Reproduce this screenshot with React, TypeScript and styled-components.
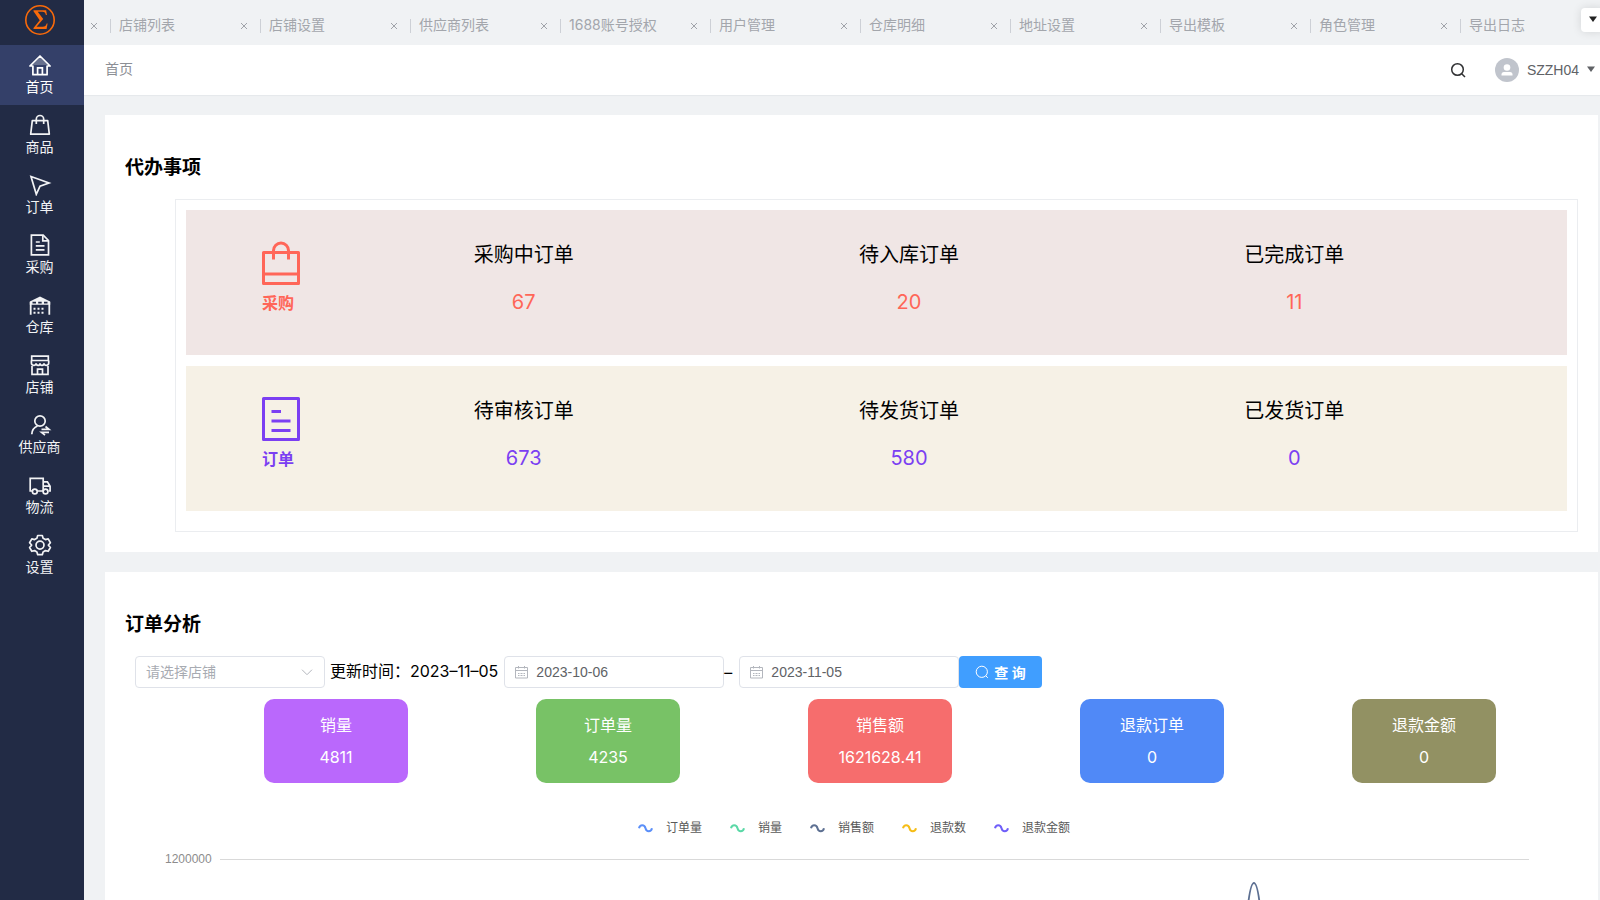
import React from "react";
import styled, { createGlobalStyle } from "styled-components";

const uiFont = `Inter, "Noto Sans CJK SC", sans-serif`;
const fieldFont = `"Liberation Sans", "Noto Sans CJK SC", sans-serif`;

const GlobalStyle = createGlobalStyle`
  *, *::before, *::after { box-sizing: border-box; }
  body { margin: 0; font-family: ${uiFont}; font-size: 14px; color: #000; background: #f0f2f4; }
  button, input, select { font: inherit; color: inherit; margin: 0; }
  a { color: inherit; text-decoration: none; }
  h3, p, ul, dl, dd { margin: 0; padding: 0; }
  svg { display: block; flex: none; }
`;

const Shell = styled.div`
  display: grid;
  grid-template-columns: 84px minmax(0, 1fr);
  height: 100vh;
  overflow: hidden;
`;

const Sidebar = styled.nav`
  display: flex;
  flex-direction: column;
  background: #222b45;
`;

const Logo = styled.a`
  display: flex;
  justify-content: center;
  height: 45px;
  padding: 4px 5px 0 0;
`;

const SideLink = styled.a<{ $active?: boolean }>`
  display: flex;
  flex-direction: column;
  align-items: center;
  gap: 1px;
  height: 60px;
  padding: 9px 5px 0 0;
  line-height: 20px;
  color: ${(p) => (p.$active ? "#fff" : "#f2f3f5")};
  background: ${(p) => (p.$active ? "#344069" : "transparent")};
`;

const Main = styled.div`
  display: flex;
  flex-direction: column;
  min-width: 0;
`;

const TabBar = styled.div`
  position: relative;
  display: flex;
  flex: none;
  align-items: center;
  height: 45px;
  padding-top: 7px;
  overflow: hidden;
  color: #a3a6ac;
`;

const Tab = styled.div<{ $cut?: boolean }>`
  display: flex;
  flex: none;
  align-items: center;
  justify-content: space-between;
  width: ${(p) => (p.$cut ? 26 : 150)}px;
  padding: 0 10px 0 ${(p) => (p.$cut ? 0 : 8)}px;
  border-left: ${(p) => (p.$cut ? 0 : 1)}px solid #cdd0d6;
  height: 14px;
  white-space: nowrap;
`;

const NavText = styled.a`
  padding-bottom: 2px;
  line-height: 20px;
`;

const PlainButton = styled.button`
  display: flex;
  align-items: center;
  justify-content: center;
  padding: 0;
  border: 0;
  background: none;
`;

const CloseButton = styled(PlainButton)`
  width: 12px;
  height: 12px;
  margin-left: auto;
`;

const TabMenuButton = styled(PlainButton)`
  position: absolute;
  top: 8px;
  right: -5px;
  width: 24px;
  height: 24px;
  border-radius: 4px;
  background: #fff;
  box-shadow: 0 0 10px rgba(0, 0, 0, 0.12);
`;

const TopBar = styled.header`
  display: flex;
  flex: none;
  align-items: center;
  justify-content: space-between;
  height: 50px;
  padding: 0 5px 0 21px;
  background: #fff;
  box-shadow: 0 1px 1px rgba(0, 21, 41, 0.04);
`;

const Crumb = styled(NavText)`
  color: #8c8f95;
`;

const UserArea = styled.div`
  display: flex;
  align-items: center;
  gap: 29px;
`;

const UserButton = styled(PlainButton)`
  gap: 8px;
  font-family: ${fieldFont};
  color: #606266;
`;

const Content = styled.main`
  display: flex;
  flex-direction: column;
  gap: 20px;
  min-height: 0;
  padding: 20px 2px 0 21px;
`;

const Panel = styled.section`
  flex: none;
  padding: 41px 20px 20px;
  background: #fff;
`;

const PanelTitle = styled.h3`
  margin-bottom: 19px;
  font-size: 19px;
  line-height: 24px;
`;

const TodoBox = styled.div`
  display: flex;
  flex-direction: column;
  gap: 11px;
  margin-left: 50px;
  padding: 10px 10px 20px;
  border: 1px solid #ebedf0;
`;

const TodoRow = styled.div<{ $bg: string; $accent: string }>`
  display: grid;
  grid-template-columns: 69px repeat(3, 1fr);
  min-height: 145px;
  padding: 30px 80px 0 76px;
  background: ${(p) => p.$bg};
  color: ${(p) => p.$accent};
`;

const TodoKind = styled.div`
  display: flex;
  flex-direction: column;
  gap: 6px;
  padding-top: 1px;
  font-size: 16px;
  font-weight: 700;
  line-height: 24px;
`;

const TodoCell = styled.div`
  display: flex;
  flex-direction: column;
  align-items: center;
  gap: 17px;
  font-size: 20px;
  line-height: 30px;
`;

const TodoLabel = styled.span`
  color: #000;
`;

const Toolbar = styled.form`
  display: flex;
  align-items: center;
  height: 32px;
  margin: 0 0 11px 10px;
`;

const Field = styled.label<{ $width: number }>`
  display: flex;
  align-items: center;
  gap: 8px;
  width: ${(p) => p.$width}px;
  height: 32px;
  padding: 0 11px 0 10px;
  border: 1px solid #dfe2e9;
  border-radius: 4px;
  background: #fff;
  font-family: ${fieldFont};
  color: #606266;
`;

const TextInput = styled.input`
  flex: 1;
  min-width: 0;
  padding: 0;
  border: 0;
  outline: 0;
  background: none;
`;

const ShopSelect = styled.select`
  flex: 1;
  min-width: 0;
  padding: 0;
  border: 0;
  outline: 0;
  appearance: none;
  background: none;
  color: #a8abb2;
`;

const UpdateText = styled.span`
  padding: 0 6px 4px 5px;
  font-size: 16px;
  white-space: nowrap;
`;

const Dash = styled.span`
  width: 15px;
  font-size: 16px;
`;

const QueryButton = styled.button`
  display: flex;
  align-items: center;
  gap: 5px;
  height: 32px;
  padding: 0 16px;
  border: 0;
  border-radius: 4px;
  background: #409eff;
  color: #fff;
  font-weight: 700;
  white-space: nowrap;
`;

const Stats = styled.dl`
  display: grid;
  grid-template-columns: repeat(5, 1fr);
  justify-items: center;
  padding: 0 18px 0 75px;
`;

const StatCard = styled.div<{ $bg: string }>`
  width: 144px;
  padding: 10px 0;
  border-radius: 10px;
  background: ${(p) => p.$bg};
  color: #fff;
  font-size: 16px;
  line-height: 32px;
  text-align: center;
`;

const Legend = styled.ul`
  display: flex;
  justify-content: center;
  gap: 28px;
  margin: 35px 0 11px 5px;
  list-style: none;
  font-size: 12px;
  line-height: 20px;
  color: #595959;
`;

const LegendItem = styled.li`
  display: flex;
  align-items: center;
  gap: 13px;
`;

const Chart = styled.div`
  display: grid;
  grid-template-columns: auto 1fr;
  gap: 8px;
  padding: 0 49px 0 40px;
`;

const AxisLabel = styled.span`
  font-family: ${fieldFont};
  font-size: 12px;
  line-height: 20px;
  color: #8c8c8c;
`;

const Plot = styled.div`
  margin-top: 10px;
  border-top: 1px solid #d9d9d9;
`;

const icon = (body: React.ReactNode) => (
  <svg width="24" height="22" viewBox="0 0 24 22" fill="none" stroke="currentColor" strokeWidth="1.7">
    {body}
  </svg>
);

const sideItems = [
  { name: "首页", art: icon(<><path d="M12 2 1.9 12h3v8.7h14.2V12h3Z" strokeLinejoin="round" /><path d="M12 3 4 11h16Z" fill="currentColor" fillOpacity=".25" stroke="none" /><path d="M9.6 20.5v-6.7h4.8v6.7" /></>) },
  { name: "商品", art: icon(<><path d="M4.3 6.6h15.4l1.6 13.6H2.7Z" strokeLinejoin="round" /><path d="M8.3 10V5.2a3.7 3.7 0 0 1 7.4 0V10" /></>) },
  { name: "订单", art: icon(<path d="M3 2.5 21 9l-9 3.2L8.3 20.3Z" />) },
  { name: "采购", art: icon(<><path d="M3.4 1.2h11.8l5.3 5.3v14.3H3.4Z" /><path d="M14.8 1.5v5.3h5.5M7.8 8h4M7.8 11.8h8.7M7.8 15.8h8.7" /></>) },
  { name: "仓库", art: icon(<><path d="M1.8 7.500 12 2.400 22.200 7.500v3.300H1.800Z" fill="currentColor" stroke="none" /><path d="M2.700 8v12.800M21.300 8v12.800" strokeWidth="1.800" /><path d="M4.500 8.600h3.500M10.200 8.600h3.500M16 8.600h3.500" stroke="#222b45" strokeWidth="1.600" /><path d="M5.500 14.800h2m2 0h2m2 0h2M5.500 18.800h2m2 0h2m2 0h2" strokeWidth="2" /></>) },
  { name: "店铺", art: icon(<><path d="M3.7 2.2h16.6v4.3H3.7ZM4 12v8.3h16V12M9.5 20v-4.8h5V20" /><path d="M3.4 6.5v2.6c0 2.8 4.3 3 4.7.3.6 2.7 3.7 2.7 3.9 0 .3 2.7 3.4 2.7 4 0 .4 2.7 4.7 2.5 4.7-.3V6.5" /></>) },
  { name: "供应商", art: icon(<><circle cx="12" cy="7" r="5.2" /><path d="M9.5 12C5.8 13.5 4 16 3.8 20.3" strokeWidth="1.8" /><path d="M13.500 15.300h7.500l-3.500-2.800M21 18.300h-7.500l3.500 2.800" /></>) },
  { name: "物流", art: icon(<><path d="M4.5 17H2.2V4.3h13V17H9M15.2 7.8h4.2l2.7 4.5V17h-1.5M15.2 12.2h6.6" /><circle cx="6.8" cy="17.5" r="2.4" /><circle cx="17.5" cy="17.5" r="2.4" /></>) },
  { name: "设置", art: icon(<><path d="M9.7 1.5h4.6l.8 2.8 2.3 1.3 2.8-.7 2.2 3.8-2 2.3v.2l2 2.3-2.2 3.8-2.8-.7-2.3 1.3-.8 2.8H9.7l-.8-2.8-2.3-1.3-2.8.7-2.2-3.8 2-2.3V11l-2-2.3 2.2-3.8 2.8.7 2.3-1.3Z" strokeLinejoin="round" /><circle cx="12" cy="11.1" r="4" /></>) },
];

const tabs = ["店铺列表", "店铺设置", "供应商列表", "1688账号授权", "用户管理", "仓库明细", "地址设置", "导出模板", "角色管理", "导出日志"];

const todos = [
  {
    kind: "采购", bg: "#f0e6e5", accent: "#ff6658",
    art: <><path d="M1.5 11.5h35v31h-35ZM1.5 33h35" /><path d="M11.5 18.5V9.5a7.5 7.5 0 0 1 15 0v9" /></>,
    cells: [["采购中订单", "67"], ["待入库订单", "20"], ["已完成订单", "11"]],
  },
  {
    kind: "订单", bg: "#f6f1e6", accent: "#7b3ff2",
    art: <path d="M1.5 1.5h35v41h-35ZM9.5 14.5H19M9.5 24h19M9.5 33.5h19" />,
    cells: [["待审核订单", "673"], ["待发货订单", "580"], ["已发货订单", "0"]],
  },
];

const stats = [
  ["销量", "4811", "#ba68fc"],
  ["订单量", "4235", "#78c266"],
  ["销售额", "1621628.41", "#f66d6d"],
  ["退款订单", "0", "#5089f7"],
  ["退款金额", "0", "#929163"],
];

const series = [
  ["订单量", "#5b8ff9"],
  ["销量", "#5ad8a6"],
  ["销售额", "#5d7092"],
  ["退款数", "#f6bd16"],
  ["退款金额", "#6f5ef9"],
];

const CloseIcon = () => (
  <svg width="8" height="8" viewBox="0 0 8 8" stroke="#a0a3a9" strokeWidth="1">
    <path d="m1 1 6 6M7 1 1 7" />
  </svg>
);

const Caret = ({ color }: { color: string }) => (
  <svg width="8" height="10" viewBox="0 0 8 10" fill={color}>
    <path d="M0 1.500h8L4 7Z" />
  </svg>
);

const CalendarIcon = () => (
  <svg width="13" height="14" viewBox="0 0 13 14" fill="none" stroke="#b3b6bd">
    <path d="M.5 2.5h12v10.500H.5ZM.5 5.500h12M3.500 1v2.500M9.500 1v2.500M3 8.500h1.500m1 0H7.500m1 0H10M3 10.500h1.500m1 0H7.500m1 0H10" />
  </svg>
);

function SideNav() {
  return (
    <Sidebar>
      <Logo href="#" aria-label="Logo">
        <svg width="32" height="32" viewBox="0 0 32 32">
          <circle cx="16" cy="16" r="14.200" fill="none" stroke="#f96a0a" strokeWidth="1.600" />
          <path d="M9.500 6.300h12.700l.7 4.700h-1c-.5-2.300-1.300-3.200-3.500-3.200h-4.700l5.500 7.200-6.700 7.700h6.200c2.300 0 3.300-1 4-3.200h.9l-1 5.500H9.500v-1l6.200-7.700-6.200-9Z" fill="#f96a0a" />
        </svg>
      </Logo>
      {sideItems.map((item, i) => (
        <SideLink key={item.name} href="#" $active={i === 0}>
          {item.art}
          {item.name}
        </SideLink>
      ))}
    </Sidebar>
  );
}

function TopArea() {
  return (
    <>
      <TabBar>
        <Tab $cut>
          <CloseButton aria-label="关闭"><CloseIcon /></CloseButton>
        </Tab>
        {tabs.map((name, i) => (
          <Tab key={name}>
            <NavText href="#">{name}</NavText>
            {i < tabs.length - 1 && <CloseButton aria-label="关闭"><CloseIcon /></CloseButton>}
          </Tab>
        ))}
        <TabMenuButton aria-label="更多"><Caret color="#222" /></TabMenuButton>
      </TabBar>
      <TopBar>
        <Crumb href="#">首页</Crumb>
        <UserArea>
          <PlainButton aria-label="搜索">
            <svg width="16" height="16" viewBox="0 0 16 16" fill="none" stroke="#303133" strokeWidth="1.500">
              <circle cx="7.500" cy="7.500" r="5.800" />
              <path d="m11.700 11.700 3.300 3.300" />
            </svg>
          </PlainButton>
          <UserButton>
            <svg width="24" height="24" viewBox="0 0 24 24">
              <circle cx="12" cy="12" r="12" fill="#c0c4cc" />
              <circle cx="12" cy="9.500" r="3.300" fill="#fff" />
              <path d="M6.500 17.500v-1a2.500 2.500 0 0 1 2.500-2.500h6a2.500 2.500 0 0 1 2.500 2.500v1Z" fill="#fff" />
            </svg>
            SZZH04
            <Caret color="#606266" />
          </UserButton>
        </UserArea>
      </TopBar>
    </>
  );
}

function TodoPanel() {
  return (
    <Panel>
      <PanelTitle>代办事项</PanelTitle>
      <TodoBox>
        {todos.map((row) => (
          <TodoRow key={row.kind} $bg={row.bg} $accent={row.accent}>
            <TodoKind>
              <svg width="38" height="44" viewBox="0 0 38 44" fill="none" stroke="currentColor" strokeWidth="3" strokeLinejoin="round">
                {row.art}
              </svg>
              {row.kind}
            </TodoKind>
            {row.cells.map(([label, value]) => (
              <TodoCell key={label}>
                <TodoLabel>{label}</TodoLabel>
                <span>{value}</span>
              </TodoCell>
            ))}
          </TodoRow>
        ))}
      </TodoBox>
    </Panel>
  );
}

function AnalysisPanel() {
  return (
    <Panel>
      <PanelTitle>订单分析</PanelTitle>
      <Toolbar>
        <Field $width={190}>
          <ShopSelect aria-label="店铺" defaultValue="">
            <option value="">请选择店铺</option>
          </ShopSelect>
          <svg width="12" height="7" viewBox="0 0 12 7" fill="none" stroke="#b3b6bd">
            <path d="m1 .7 5 5 5-5" />
          </svg>
        </Field>
        <UpdateText>更新时间：2023–11–05</UpdateText>
        <Field $width={220}>
          <CalendarIcon />
          <TextInput aria-label="开始日期" defaultValue="2023-10-06" />
        </Field>
        <Dash>–</Dash>
        <Field $width={220}>
          <CalendarIcon />
          <TextInput aria-label="结束日期" defaultValue="2023-11-05" />
        </Field>
        <QueryButton type="button">
          <svg width="14" height="14" viewBox="0 0 14 14" fill="none" stroke="#fff">
            <circle cx="6.800" cy="6.800" r="5.600" />
            <path d="m10.800 10.800 2 2" />
          </svg>
          查 询
        </QueryButton>
      </Toolbar>
      <Stats>
        {stats.map(([label, value, bg]) => (
          <StatCard key={label} $bg={bg}>
            <dt>{label}</dt>
            <dd>{value}</dd>
          </StatCard>
        ))}
      </Stats>
      <Legend>
        {series.map(([name, color]) => (
          <LegendItem key={name}>
            <svg width="15" height="10" viewBox="0 0 15 10" fill="none" stroke={color} strokeWidth="2">
              <path d="M1 5.200c1-4 5.500-4 6.500 0s5.500 4 6.500 0" />
            </svg>
            {name}
          </LegendItem>
        ))}
      </Legend>
      <Chart>
        <AxisLabel>1200000</AxisLabel>
        <Plot>
          <svg width="100%" height="240" viewBox="0 0 1310 240" preserveAspectRatio="none" fill="none" stroke="#5d7092" strokeWidth="2">
            <path d="M1018 240C1024 120 1026 23 1034.500 23S1045 120 1051 240" vectorEffect="non-scaling-stroke" />
          </svg>
        </Plot>
      </Chart>
    </Panel>
  );
}

export default function App() {
  return (
    <>
      <GlobalStyle />
      <Shell>
        <SideNav />
        <Main>
          <TopArea />
          <Content>
            <TodoPanel />
            <AnalysisPanel />
          </Content>
        </Main>
      </Shell>
    </>
  );
}
